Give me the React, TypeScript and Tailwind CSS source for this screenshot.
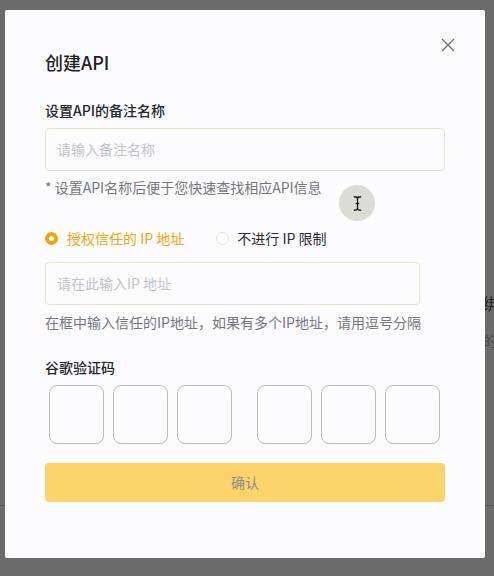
import React from "react";

const font = { fontFamily: '"Noto Sans CJK SC", "Noto Sans", sans-serif' };

const CodeBox = () => (
  <div className="w-[55px] h-[59px] rounded-[8px] border border-[#b9b9c8] bg-[#fcfcfe]" />
);

const App = () => {
  return (
    <div
      className="relative w-[494px] h-[576px] overflow-hidden bg-[#6b6b6b]"
      style={font}
    >
      {/* page behind the overlay */}
      <span className="absolute left-[483px] top-[292px] text-[16px] leading-[22px] text-[#1e1e1e] whitespace-nowrap">
        绑定
      </span>
      <span className="absolute left-[483px] top-[330px] text-[14px] leading-[20px] text-[#4a4a4a] whitespace-nowrap">
        的设
      </span>
      <div className="absolute left-0 right-0 top-[505px] h-px bg-[#555560]" />

      {/* modal */}
      <div className="absolute left-[5px] top-[10px] w-[480px] h-[548px] rounded-[2px] bg-[#fcfcfe] pt-[39px] px-10">
        <button className="absolute left-[436px] top-[28px] w-[14px] h-[14px] text-[#6a6a70]">
          <svg viewBox="0 0 14 14" width="14" height="14" fill="none" stroke="currentColor" strokeWidth="1.3">
            <path d="M1 1L13 13M13 1L1 13" />
          </svg>
        </button>

        <h2 className="text-[18px] leading-[26px] font-medium text-[#1f1f24]">创建API</h2>

        <p className="mt-[25px] text-[14px] leading-[20px] font-medium text-[#26262b]">设置API的备注名称</p>
        <div className="mt-2 h-[43px] rounded-[4px] border border-[#e7e4cf] flex items-center px-[11px]">
          <span className="text-[14px] text-[#c2c2cc]">请输入备注名称</span>
        </div>
        <p className="mt-[6px] text-[14px] leading-[20px] text-[#76767e]">* 设置API名称后便于您快速查找相应API信息</p>

        <div className="mt-[31px] flex items-center text-[14px] leading-[20px]">
          <div className="flex items-center gap-[9px] text-[#f1a50d]">
            <span className="w-[13px] h-[13px] rounded-full border-[4px] border-[#f1a50d] bg-white" />
            授权信任的 IP 地址
          </div>
          <div className="ml-[32px] flex items-center gap-[8px] text-[#2a2a30]">
            <span className="w-[13px] h-[13px] rounded-full border border-[#e6e3cc] bg-white" />
            不进行 IP 限制
          </div>
        </div>

        <div className="mt-[14px] w-[375px] h-[43px] rounded-[4px] border border-[#e7e4cf] flex items-center px-[11px]">
          <span className="text-[14px] text-[#c2c2cc]">请在此输入IP 地址</span>
        </div>
        <p className="mt-[7px] text-[14px] leading-[20px] text-[#76767e] whitespace-nowrap">
          在框中输入信任的IP地址，如果有多个IP地址，请用逗号分隔
        </p>

        <p className="mt-[25px] text-[14px] leading-[20px] font-medium text-[#26262b]">谷歌验证码</p>
        <div className="mt-2 pl-1 flex gap-[25px]">
          <div className="flex gap-[9px]">
            <CodeBox />
            <CodeBox />
            <CodeBox />
          </div>
          <div className="flex gap-[9px]">
            <CodeBox />
            <CodeBox />
            <CodeBox />
          </div>
        </div>

        <button className="mt-[19px] w-full h-[39px] rounded-[4px] bg-[#fdd46c] text-[14px] text-[#8c8c8c]">
          确认
        </button>
      </div>

      {/* cursor highlight from the screen recording */}
      <div className="absolute left-[339px] top-[185px] w-[36px] h-[36px] rounded-full bg-[#dcdcd6] flex items-center justify-center">
        <svg viewBox="0 0 10 18" width="9" height="17" fill="none" stroke="#111" strokeWidth="1.4">
          <path d="M1 1.5Q5 1.5 5 3.5V14.5Q5 16.5 9 16.5M9 1.5Q5 1.5 5 3.5M5 14.5Q5 16.5 1 16.5M3 9H7" />
        </svg>
      </div>
    </div>
  );
};

export default App;
